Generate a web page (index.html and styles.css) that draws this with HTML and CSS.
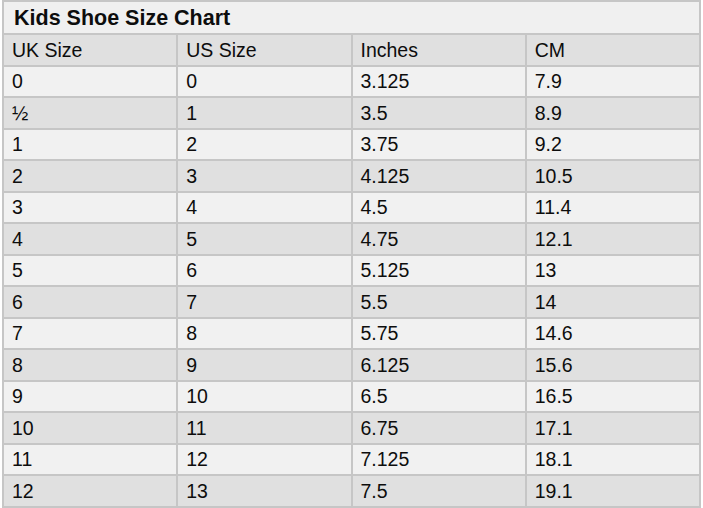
FILE: index.html
```html
<!DOCTYPE html>
<html>
<head>
<meta charset="utf-8">
<link rel="stylesheet" href="styles.css">
</head>
<body>
<table class="chart">
  <colgroup><col class="c"><col class="c"><col class="c"><col class="c"></colgroup>
  <tr class="title"><td colspan="4">Kids Shoe Size Chart</td></tr>
  <tr class="dark"><td>UK Size</td><td>US Size</td><td>Inches</td><td>CM</td></tr>
  <tr class="light"><td>0</td><td>0</td><td>3.125</td><td>7.9</td></tr>
  <tr class="dark"><td>½</td><td>1</td><td>3.5</td><td>8.9</td></tr>
  <tr class="light"><td>1</td><td>2</td><td>3.75</td><td>9.2</td></tr>
  <tr class="dark"><td>2</td><td>3</td><td>4.125</td><td>10.5</td></tr>
  <tr class="light"><td>3</td><td>4</td><td>4.5</td><td>11.4</td></tr>
  <tr class="dark"><td>4</td><td>5</td><td>4.75</td><td>12.1</td></tr>
  <tr class="light"><td>5</td><td>6</td><td>5.125</td><td>13</td></tr>
  <tr class="dark"><td>6</td><td>7</td><td>5.5</td><td>14</td></tr>
  <tr class="light"><td>7</td><td>8</td><td>5.75</td><td>14.6</td></tr>
  <tr class="dark"><td>8</td><td>9</td><td>6.125</td><td>15.6</td></tr>
  <tr class="light"><td>9</td><td>10</td><td>6.5</td><td>16.5</td></tr>
  <tr class="dark"><td>10</td><td>11</td><td>6.75</td><td>17.1</td></tr>
  <tr class="light"><td>11</td><td>12</td><td>7.125</td><td>18.1</td></tr>
  <tr class="dark"><td>12</td><td>13</td><td>7.5</td><td>19.1</td></tr>
</table>
</body>
</html>
```

FILE: styles.css
```css
html, body {
  margin: 0;
  padding: 0;
  background: #ffffff;
}
body {
  padding: 0 2px 0 2px;
  font-family: "Liberation Sans", Arial, sans-serif;
  color: #0d0d0d;
}
.chart {
  width: 699px;
  border-collapse: collapse;
  table-layout: fixed;
}
.c {
  width: 25%;
}
.chart td {
  border: 2px solid #c6c6c6;
  padding: 0 8px;
  height: 29.5px;
  font-size: 19.5px;
  line-height: 22px;
  text-align: left;
  vertical-align: middle;
}
.title td {
  height: 31px;
  background: #f0f0f0;
  font-size: 21.5px;
  font-weight: bold;
  padding-left: 10px;
}
.light td {
  background: #f1f1f1;
}
.dark td {
  background: #e0e0e0;
}
```
